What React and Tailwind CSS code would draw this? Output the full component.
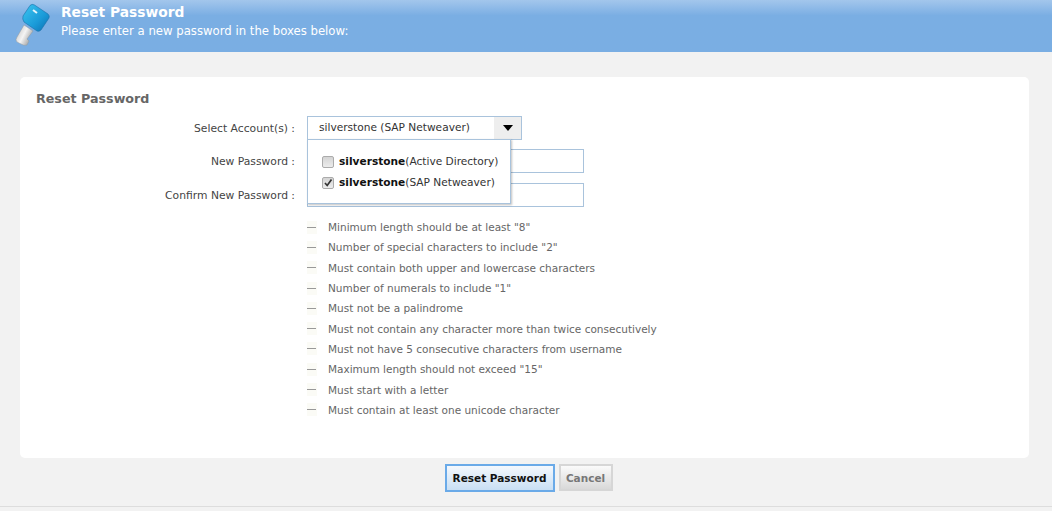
const rules = [
  'Minimum length should be at least "8"',
  'Number of special characters to include "2"',
  'Must contain both upper and lowercase characters',
  'Number of numerals to include "1"',
  'Must not be a palindrome',
  'Must not contain any character more than twice consecutively',
  'Must not have 5 consecutive characters from username',
  'Maximum length should not exceed "15"',
  'Must start with a letter',
  'Must contain at least one unicode character',
];

function KeyIcon() {
  return (
    <svg width="38" height="46" viewBox="0 0 38 46" className="shrink-0">
      <defs>
        <linearGradient id="kb" x1="0" y1="0" x2="1" y2="1">
          <stop offset="0" stopColor="#3cc6f0" />
          <stop offset="0.6" stopColor="#1a9ad8" />
          <stop offset="1" stopColor="#0a6fb0" />
        </linearGradient>
        <linearGradient id="ks" x1="0" y1="0" x2="1" y2="0.6">
          <stop offset="0" stopColor="#b9b9b9" />
          <stop offset="0.55" stopColor="#f4f4f4" />
          <stop offset="1" stopColor="#9e9e9e" />
        </linearGradient>
      </defs>
      <path d="M9 22 L18 28 L12 36 L14 38 L12 42 Q9 43 6 41 L2 39 Q0 37 2 34 Z" fill="url(#ks)" stroke="#8f9aa3" strokeWidth="0.5" />
      <path d="M8 13 L15 2.500 Q17 0.500 19.500 2 L33 11 Q35 13 34 15 L26 27 Q24 29 22 28 L9 19 Q7 16 8 13 Z" fill="url(#kb)" stroke="#1b6fa8" strokeWidth="0.6" />
      <path d="M18 7 L22 10" stroke="#e6f6fc" strokeWidth="2" />
    </svg>
  );
}

function Check({ checked }) {
  return (
    <span className="flex h-[12px] w-[12px] shrink-0 items-center justify-center rounded-[2px] border border-[#ababab] bg-gradient-to-b from-[#d4d4d4] to-[#ececec]">
      {checked && (
        <svg width="10" height="10" viewBox="0 0 10 10">
          <path d="M2 5 L4.200 7.500 L8.500 1.500" fill="none" stroke="#333" strokeWidth="1.700" />
        </svg>
      )}
    </span>
  );
}

export default function App() {
  return (
    <div className="h-[511px] overflow-hidden bg-[#f2f2f2] font-['DejaVu_Sans',sans-serif] text-[10.5px] text-[#555]">
      <header className="flex h-[52px] items-start gap-[8px] bg-gradient-to-b from-[#a3c6ec] from-0% via-[#7aaee3] via-30% to-[#7aaee3] pl-[15px] pt-[3px]">
        <KeyIcon />
        <div className="text-white">
          <div className="mt-[1px] text-[13.8px] leading-[17px] font-bold">Reset Password</div>
          <div className="mt-[2px] text-[11.7px] leading-[16px]">Please enter a new password in the boxes below:</div>
        </div>
      </header>

      <main className="mx-[20px] mt-[25px] mr-[23px] h-[381px] rounded-[5px] bg-white pt-[14px] pl-[16px]">
        <h1 className="text-[12.7px] leading-[16px] font-bold text-[#666]">Reset Password</h1>
        <div className="mt-[9px] grid grid-cols-[259px_auto] justify-start gap-x-[12px]">
          <label className="h-[23px] text-right text-[10.75px] leading-[25px] text-[#444]">Select Account(s) :</label>
          <div className="relative">
            <div className="flex h-[24px] w-[215px] items-center justify-between border border-[#a9c3dc] bg-white pl-[11px] text-[10.6px] text-[#333]">
              <span>silverstone (SAP Netweaver)</span>
              <span className="flex h-full w-[27px] items-center justify-center bg-[#eeeeee]">
                <span className="h-0 w-0 border-x-[5px] border-t-[6px] border-x-transparent border-t-black" />
              </span>
            </div>
            <div className="absolute top-[23px] left-0 z-10 h-[65px] w-[204px] border border-[#a9c3dc] bg-white pt-[12px] pl-[14px] text-[10.6px] text-[#333] shadow-[1px_1px_2px_rgba(0,0,0,0.25)]">
              <div className="flex h-[20px] items-center gap-[5px]">
                <Check />
                <span><b className="text-[#111]">silverstone</b>(Active Directory)</span>
              </div>
              <div className="mt-[1px] flex h-[20px] items-center gap-[5px]">
                <Check checked />
                <span><b className="text-[#111]">silverstone</b>(SAP Netweaver)</span>
              </div>
            </div>
          </div>

          <label className="mt-[9px] h-[24px] text-right text-[10.75px] leading-[25px] text-[#444]">New Password :</label>
          <div className="mt-[9px] h-[24px] w-[277px] border border-[#a9c3dc] bg-white" />
          <label className="mt-[10px] h-[24px] text-right text-[10.75px] leading-[25px] text-[#444]">Confirm New Password :</label>
          <div className="mt-[10px] h-[24px] w-[277px] border border-[#a9c3dc] bg-white" />

          <ul className="col-start-2 mt-[10px]">
            {rules.map((r) => (
              <li key={r} className="flex h-[20.3px] items-center gap-[11px] leading-[20px] text-[#666]">
                <span className="flex h-[13px] w-[10px] items-center bg-[#fbfbf6]">
                  <span className="h-px w-[9px] bg-[#999]" />
                </span>
                <span>{r}</span>
              </li>
            ))}
          </ul>
        </div>
      </main>

      <div className="mt-[6px] flex justify-center gap-[4px] pl-[5px]">
        <button className="h-[28px] w-[110px] border-2 border-[#6aaae8] bg-gradient-to-b from-[#f4f8fd] to-[#c9dff4] pt-[1px] text-[10.5px] font-bold text-[#111]">Reset Password</button>
        <button className="h-[27px] w-[54px] border-2 border-[#d6d6d6] bg-gradient-to-b from-[#fafafa] to-[#d9d9d9] pt-[2px] text-[10.5px] font-bold text-[#777]">Cancel</button>
      </div>
      <div className="mt-[14px] border-t border-[#dddddd]" />
    </div>
  );
}
